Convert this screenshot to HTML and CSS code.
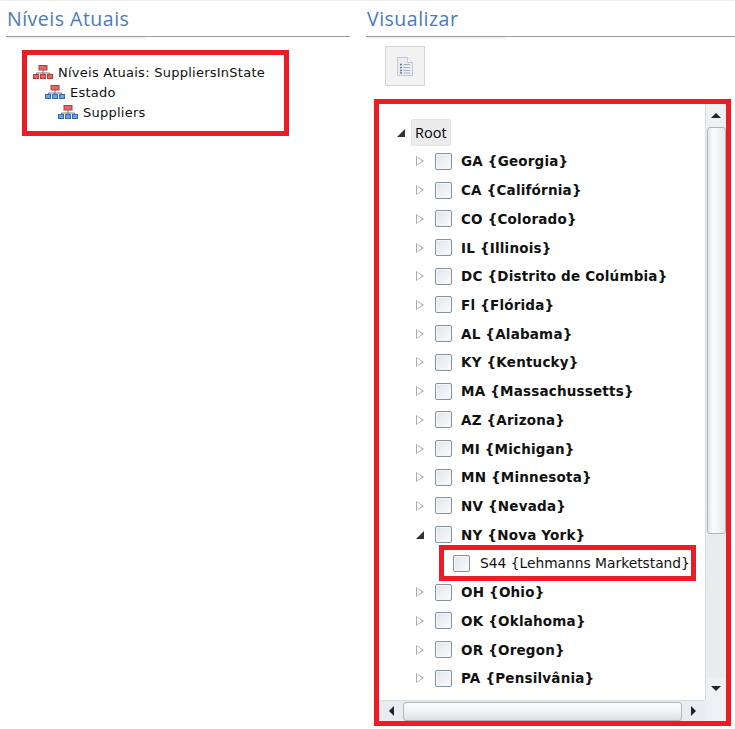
FILE: index.html
```html
<!DOCTYPE html>
<html lang="pt">
<head>
<meta charset="utf-8">
<title>Níveis Atuais</title>
<link rel="stylesheet" href="styles.css">
</head>
<body>
<svg class="defs" width="0" height="0" aria-hidden="true">
  <symbol id="hier" viewBox="0 0 20 14">
    <path d="M10 5v3M3.500 10V8h13v2M10 8v2" fill="none" stroke="#777" stroke-width="1"/>
    <rect class="top" x="6" y="0.500" width="8" height="4.500"/>
    <rect class="low" x="0.500" y="9.500" width="5" height="4"/>
    <rect class="low" x="7.500" y="9.500" width="5" height="4"/>
    <rect class="low" x="14.500" y="9.500" width="5" height="4"/>
  </symbol>
</svg>
<main class="page">
  <section class="col col-left">
    <h2 class="title">Níveis Atuais</h2>
    <div class="rule"></div>
    <div class="levels red">
      <div class="level"><svg class="hier red-icon"><use href="#hier"/></svg>Níveis Atuais: SuppliersInState</div>
      <div class="level l1"><svg class="hier blue-icon"><use href="#hier"/></svg>Estado</div>
      <div class="level l2"><svg class="hier blue-icon"><use href="#hier"/></svg>Suppliers</div>
    </div>
  </section>
  <section class="col col-right">
    <h2 class="title">Visualizar</h2>
    <div class="rule"></div>
    <button class="tool" type="button" aria-label="Detalhes">
      <svg width="16" height="19" viewBox="0 0 16 19">
        <path d="M0.500 0.500h10l5 5v13h-15z" fill="#e9edf1" stroke="#c3c9ce"/>
        <path d="M10.500 0.500v5h5" fill="#f9fafa" stroke="#c3c9ce"/>
        <path d="M3 7.500h2M3 10.500h2M3 13.500h2M3 16h2" stroke="#5f7f96" stroke-width="1.500"/>
        <path d="M6.500 7.500h6.500M6.500 10.500h6.500M6.500 13.500h6.500M6.500 16h6.500" stroke="#a9b3bb"/>
      </svg>
    </button>
    <div class="panel red">
      <div class="viewport">
        <div class="root-row"><span class="arrow open"></span><span class="root">Root</span></div>
        <div class="row"><span class="arrow"></span><span class="check"></span><span class="name">GA {Georgia}</span></div>
        <div class="row"><span class="arrow"></span><span class="check"></span><span class="name">CA {Califórnia}</span></div>
        <div class="row"><span class="arrow"></span><span class="check"></span><span class="name">CO {Colorado}</span></div>
        <div class="row"><span class="arrow"></span><span class="check"></span><span class="name">IL {Illinois}</span></div>
        <div class="row"><span class="arrow"></span><span class="check"></span><span class="name">DC {Distrito de Colúmbia}</span></div>
        <div class="row"><span class="arrow"></span><span class="check"></span><span class="name">Fl {Flórida}</span></div>
        <div class="row"><span class="arrow"></span><span class="check"></span><span class="name">AL {Alabama}</span></div>
        <div class="row"><span class="arrow"></span><span class="check"></span><span class="name">KY {Kentucky}</span></div>
        <div class="row"><span class="arrow"></span><span class="check"></span><span class="name">MA {Massachussetts}</span></div>
        <div class="row"><span class="arrow"></span><span class="check"></span><span class="name">AZ {Arizona}</span></div>
        <div class="row"><span class="arrow"></span><span class="check"></span><span class="name">MI {Michigan}</span></div>
        <div class="row"><span class="arrow"></span><span class="check"></span><span class="name">MN {Minnesota}</span></div>
        <div class="row"><span class="arrow"></span><span class="check"></span><span class="name">NV {Nevada}</span></div>
        <div class="row"><span class="arrow open"></span><span class="check"></span><span class="name">NY {Nova York}</span></div>
        <div class="child red"><span class="check"></span><span class="child-name">S44 {Lehmanns Marketstand}</span></div>
        <div class="row"><span class="arrow"></span><span class="check"></span><span class="name">OH {Ohio}</span></div>
        <div class="row"><span class="arrow"></span><span class="check"></span><span class="name">OK {Oklahoma}</span></div>
        <div class="row"><span class="arrow"></span><span class="check"></span><span class="name">OR {Oregon}</span></div>
        <div class="row"><span class="arrow"></span><span class="check"></span><span class="name">PA {Pensilvânia}</span></div>
      </div>
      <div class="vbar">
        <span class="sbtn"><span class="tri up"></span></span>
        <span class="vthumb"></span>
        <span class="vspace"></span>
        <span class="sbtn"><span class="tri down"></span></span>
      </div>
      <div class="hbar">
        <span class="hbtn hbtn-l"><span class="tri left"></span></span>
        <span class="hthumb"></span>
        <span class="hbtn hbtn-r"><span class="tri right"></span></span>
      </div>
      <div class="corner"></div>
    </div>
  </section>
</main>
</body>
</html>
```
FILE: styles.css
```css
html, body {
  margin: 0;
  height: 729px;
  overflow: hidden;
  background: #fff;
}
.defs { position: absolute; }
.page {
  display: flex;
  height: 729px;
  padding-left: 6px;
  box-sizing: border-box;
  border-top: 1px solid #eee;
}
.col { display: flex; flex-direction: column; }
.col-left { width: 344px; margin-right: 16px; }
.col-right { width: 369px; }
.title {
  margin: 0;
  height: 35px;
  padding-left: 1px;
  font: 400 19.500px/35px "Open Sans", sans-serif;
  color: #4a7ab8;
  letter-spacing: 0.5px;
}
.rule {
  height: 4px;
  box-sizing: border-box;
  border-top: 1px solid #9c9c9c;
  background: linear-gradient(#eeeeee, #fff);
  background-size: 140px 3px;
  background-repeat: no-repeat;
}
.red { border: 5px solid #ed1c24; box-sizing: border-box; }
.levels {
  margin: 10px 0 0 16px;
  width: 267px;
  height: 86px;
  padding: 8px 0 0 6px;
  font: 13px/20px "DejaVu Sans", sans-serif;
  letter-spacing: 0.25px;
  color: #111;
}
.level { display: flex; align-items: center; gap: 5px; height: 20px; }
.l1 { padding-left: 12px; }
.l2 { padding-left: 25px; }
.hier { width: 20px; height: 14px; flex: none; margin-top: -2px; }
.top { fill: #e0686c; stroke: #b8383d; stroke-width: 1; }
.low { stroke: currentColor; stroke-width: 1; }
.red-icon { fill: #e0686c; color: #b8383d; }
.blue-icon { fill: #6f9fe4; color: #3868b0; }
.tool {
  width: 40px;
  height: 40px;
  margin: 6px 0 0 19px;
  padding: 0;
  border: 1px solid #d4d4d4;
  background: #f2f2f2;
  display: flex;
  align-items: center;
  justify-content: center;
}
.panel {
  margin: 13px 0 0 8px;
  width: 357px;
  height: 627px;
  display: grid;
  grid-template-columns: 326px 21px;
  grid-template-rows: 596px 21px;
}
.viewport { overflow: hidden; padding-top: 14px; }
.root-row { display: flex; align-items: center; height: 29px; padding-left: 18px; }
.root {
  margin-left: -5px;
  padding: 0 3px;
  height: 27px;
  background: #ececec;
  border: 1px solid #e2e2e2;
  border-radius: 2px;
  box-sizing: border-box;
  font: 14.500px/25px "Open Sans", sans-serif;
  color: #000;
}
.row { display: flex; align-items: center; height: 28.720px; padding-left: 36px; }
.arrow {
  width: 0;
  height: 0;
  flex: none;
  margin-right: 11px;
  border-style: solid;
  border-width: 5.500px 0 5.500px 8px;
  border-color: transparent transparent transparent #a8a8a8;
  position: relative;
}
.arrow::after {
  content: "";
  position: absolute;
  left: -7px;
  top: -4px;
  border-style: solid;
  border-width: 4px 0 4px 5.500px;
  border-color: transparent transparent transparent #fff;
}
.arrow.open {
  border-width: 0 0 8px 8px;
  border-color: transparent transparent #333 transparent;
}
.arrow.open::after { display: none; }
.check {
  width: 17px;
  height: 17px;
  flex: none;
  box-sizing: border-box;
  border: 1px solid #85919c;
  border-radius: 2px;
  background: linear-gradient(135deg, #dfe5ec, #fafbfc);
  box-shadow: inset 0 0 0 1px #f6f7f9;
}
.row .arrow { margin-left: 1px; }
.name {
  margin-left: 9px;
  font: 700 13.500px/20px "DejaVu Sans", sans-serif;
  letter-spacing: 0.2px;
  color: #111;
  white-space: nowrap;
}
.child {
  display: flex;
  align-items: center;
  height: 36px;
  width: 257px;
  margin: -3.640px 0 -3.640px 60px;
  padding-left: 9px;
  background: #fff;
  position: relative;
}
.child-name {
  margin-left: 10px;
  font: 13.800px/20px "DejaVu Sans", sans-serif;
  color: #111;
  white-space: nowrap;
}
.vbar {
  display: flex;
  flex-direction: column;
  background: #e9edf0;
  border-left: 1px solid #d8dde1;
  box-sizing: border-box;
}
.sbtn {
  height: 23px;
  flex: none;
  display: flex;
  align-items: center;
  justify-content: center;
  background: #eef1f3;
}
.vthumb {
  height: 407px;
  margin: 0 0 0 1px;
  flex: none;
  border: 1px solid #aeb6bc;
  border-radius: 3px;
  box-sizing: border-box;
  background: linear-gradient(90deg, #e2e5e8, #fbfbfc 30%, #e6e9eb);
}
.vspace { flex: 1; }
.hbar {
  display: flex;
  align-items: center;
  background: #e9edf0;
  border-top: 1px solid #d8dde1;
  box-sizing: border-box;
}
.hbtn {
  height: 100%;
  flex: none;
  display: flex;
  align-items: center;
  justify-content: center;
}
.hbtn-l { width: 24px; }
.hbtn-r { width: 23px; }
.hthumb {
  flex: 1;
  height: 19px;
  border: 1px solid #aeb6bc;
  border-radius: 3px;
  box-sizing: border-box;
  background: linear-gradient(#fbfbfc, #f0f2f3 50%, #dfe2e5);
}
.corner { background: #eef1f3; }
.tri { width: 0; height: 0; border-style: solid; }
.up { border-width: 0 5px 5px; border-color: transparent transparent #222; }
.down { border-width: 5px 5px 0; border-color: #222 transparent transparent; }
.left { border-width: 5px 5px 5px 0; border-color: transparent #222 transparent transparent; }
.right { border-width: 5px 0 5px 5px; border-color: transparent transparent transparent #222; }
```
